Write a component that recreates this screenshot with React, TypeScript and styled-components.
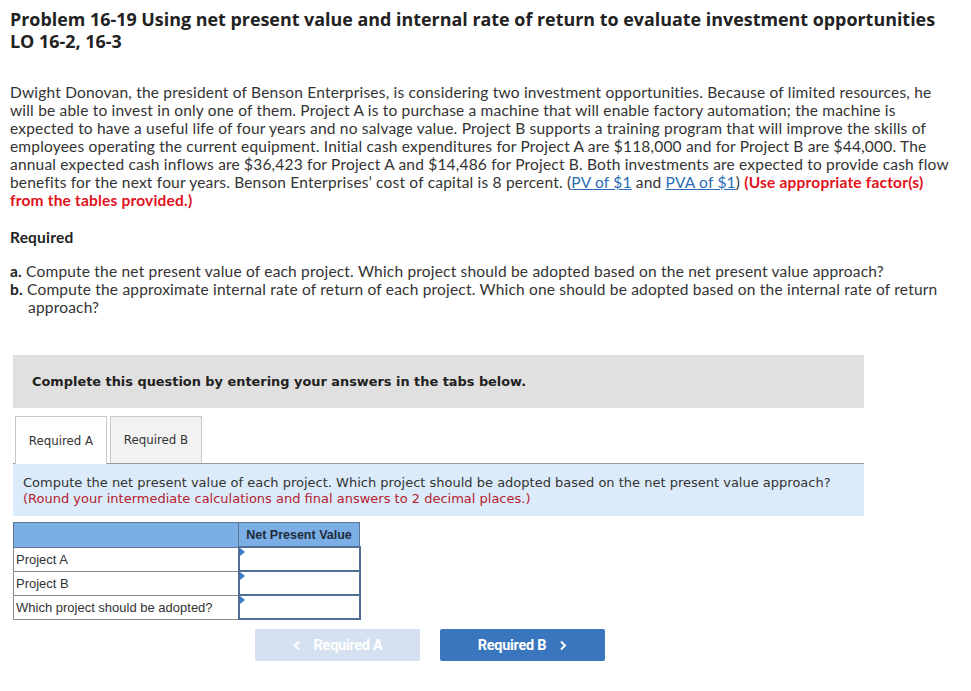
import React from "react";
import styled, { createGlobalStyle } from "styled-components";

const Global = createGlobalStyle`
  html, body { margin: 0; padding: 0; background: #fff; }
  body { font-family: "Lato", "Liberation Sans", sans-serif; color: #333; }
`;

const Page = styled.div`
  padding: 8px 10px 0 10px;
  width: 951px;
  box-sizing: border-box;
`;

const Title = styled.h1`
  margin: 0;
  font-family: "Open Sans", "Lato", sans-serif;
  font-weight: 700;
  font-size: 17.9px;
  line-height: 22px;
  color: #222;
  white-space: nowrap;
`;

const Para = styled.p`
  margin: 31px 0 0 0;
  font-size: 15.5px;
  line-height: 18px;
  color: #333;
  letter-spacing: 0.19px;
  white-space: nowrap;
`;

const Link = styled.a`
  color: #2a6bb5;
  text-decoration: underline;
`;

const Red = styled.b`
  color: #e0121b;
  font-weight: 700;
`;

const SubHead = styled.h3`
  margin: 19px 0 0 0;
  font-size: 15.5px;
  line-height: 18px;
  font-weight: 700;
  color: #222;
  letter-spacing: 0.2px;
`;

const ReqList = styled.div`
  margin-top: 16px;
  font-size: 15.5px;
  line-height: 18px;
  letter-spacing: 0.19px;
  white-space: nowrap;
`;

const ReqItem = styled.div`
  padding-left: 18px;
  text-indent: -18px;
  & b { font-weight: 700; color: #222; }
`;

const Box = styled.div`
  margin: 39px 0 0 3px;
  width: 851px;
`;

const Banner = styled.div`
  background: #e0e0e0;
  height: 53px;
  display: flex;
  align-items: center;
  padding-left: 19px;
  font-family: "DejaVu Sans", Verdana, sans-serif;
  font-weight: 700;
  font-size: 12.9px;
  color: #222;
`;

const Tabs = styled.div`
  display: flex;
  gap: 3px;
  margin-top: 8px;
  padding-left: 2px;
`;

const Tab = styled.div<{ $active?: boolean }>`
  width: 92px;
  box-sizing: border-box;
  border: 1px solid #c8c8c8;
  border-bottom: none;
  background: ${(p) => (p.$active ? "#fff" : "#f2f2f2")};
  display: flex;
  align-items: center;
  justify-content: center;
  font-family: "DejaVu Sans", Verdana, sans-serif;
  font-size: 11.8px;
  color: #333;
  position: relative;
  z-index: 1;
  margin-bottom: ${(p) => (p.$active ? "-1px" : "0")};
  height: ${(p) => (p.$active ? "48px" : "47px")};
`;

const Instruction = styled.div`
  background: #dbebf9;
  border-top: 1px solid #999;
  padding: 11px 10px 9px 10px;
  font-family: "DejaVu Sans", Verdana, sans-serif;
  font-size: 13px;
  line-height: 16px;
  color: #333;
`;

const RedNote = styled.span`
  color: #b5222f;
`;

const Table = styled.table`
  margin-top: 6px;
  border-collapse: collapse;
  font-family: "Liberation Sans", Arial, sans-serif;
  font-size: 13px;
  color: #333;
`;

const HeadCell = styled.th<{ $w: number }>`
  background: #7aaee4;
  border: 1px solid #5d7391;
  width: ${(p) => p.$w}px;
  height: 23px;
  padding: 0 3px;
  font-weight: 700;
  color: #1e2c3c;
  text-align: center;
  font-size: 12.5px;
`;

const LabelCell = styled.td`
  border: 1px solid #8a8a8a;
  height: 22px;
  padding: 1px 2px 0 2px;
  vertical-align: middle;
`;

const InputCell = styled.td`
  border: 2px solid #4f6f95;
  padding: 0;
  height: 20px;
  position: relative;
`;

const Marker = styled.span`
  position: absolute;
  left: 0;
  top: 0;
  width: 0;
  height: 0;
  border-top: 4px solid transparent;
  border-bottom: 4px solid transparent;
  border-left: 5px solid #3b7cc7;
`;

const Nav = styled.div`
  display: flex;
  gap: 20px;
  margin: 9px 0 0 245px;
`;

const NavButton = styled.button<{ $disabled?: boolean }>`
  width: 165px;
  height: 32px;
  border: none;
  border-radius: 2px;
  background: ${(p) => (p.$disabled ? "#d5e1f0" : "#3a76bd")};
  color: #fff;
  font-family: "Roboto", "Liberation Sans", sans-serif;
  font-weight: 700;
  font-size: 14.5px;
  display: flex;
  align-items: center;
  justify-content: center;
  gap: 13px;
  letter-spacing: -0.3px;
  cursor: pointer;
`;

const Chevron = ({ dir }: { dir: "left" | "right" }) => (
  <svg width="8" height="11" viewBox="0 0 8 11" fill="none">
    <path
      d={dir === "left" ? "M6 1.5 L2 5.5 L6 9.5" : "M2 1.5 L6 5.5 L2 9.5"}
      stroke="#fff"
      strokeWidth="2"
    />
  </svg>
);

const rows = ["Project A", "Project B", "Which project should be adopted?"];

export default function App() {
  return (
    <>
      <Global />
      <Page>
        <Title>
          Problem 16-19 Using net present value and internal rate of return to evaluate investment opportunities
          <br />
          LO 16-2, 16-3
        </Title>
        <Para>
          Dwight Donovan, the president of Benson Enterprises, is considering two investment opportunities. Because of limited resources, he
          <br />
          will be able to invest in only one of them. Project A is to purchase a machine that will enable factory automation; the machine is
          <br />
          expected to have a useful life of four years and no salvage value. Project B supports a training program that will improve the skills of
          <br />
          employees operating the current equipment. Initial cash expenditures for Project A are $118,000 and for Project B are $44,000. The
          <br />
          annual expected cash inflows are $36,423 for Project A and $14,486 for Project B. Both investments are expected to provide cash flow
          <br />
          benefits for the next four years. Benson Enterprises’ cost of capital is 8 percent. (<Link href="#">PV of $1</Link> and <Link href="#">PVA of $1</Link>) <Red>(Use appropriate factor(s)</Red>
          <br />
          <Red>from the tables provided.)</Red>
        </Para>
        <SubHead>Required</SubHead>
        <ReqList>
          <ReqItem>
            <b>a.</b> Compute the net present value of each project. Which project should be adopted based on the net present value approach?
          </ReqItem>
          <ReqItem>
            <b>b.</b> Compute the approximate internal rate of return of each project. Which one should be adopted based on the internal rate of return
            <br />
            approach?
          </ReqItem>
        </ReqList>
        <Box>
          <Banner>Complete this question by entering your answers in the tabs below.</Banner>
          <Tabs>
            <Tab $active>Required A</Tab>
            <Tab>Required B</Tab>
          </Tabs>
          <Instruction>
            Compute the net present value of each project. Which project should be adopted based on the net present value approach?
            <br />
            <RedNote>(Round your intermediate calculations and final answers to 2 decimal places.)</RedNote>
          </Instruction>
          <Table>
            <thead>
              <tr>
                <HeadCell $w={218}></HeadCell>
                <HeadCell $w={114}>Net Present Value</HeadCell>
              </tr>
            </thead>
            <tbody>
              {rows.map((r) => (
                <tr key={r}>
                  <LabelCell>{r}</LabelCell>
                  <InputCell>
                    <Marker />
                  </InputCell>
                </tr>
              ))}
            </tbody>
          </Table>
        </Box>
        <Nav>
          <NavButton $disabled>
            <Chevron dir="left" />
            Required A
          </NavButton>
          <NavButton>
            Required B
            <Chevron dir="right" />
          </NavButton>
        </Nav>
      </Page>
    </>
  );
}
